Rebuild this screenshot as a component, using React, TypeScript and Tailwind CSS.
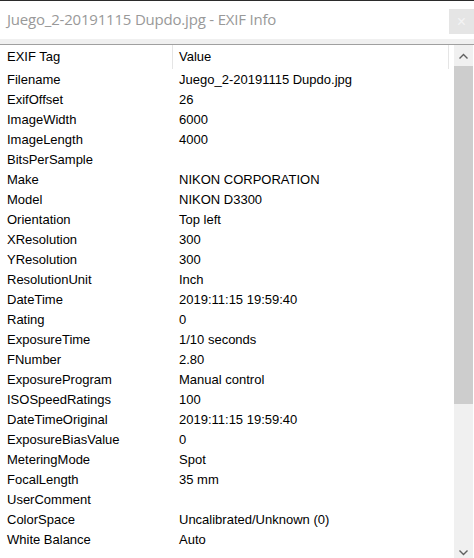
import React from 'react';

const rows: [string, string][] = [
  ['Filename', 'Juego_2-20191115 Dupdo.jpg'],
  ['ExifOffset', '26'],
  ['ImageWidth', '6000'],
  ['ImageLength', '4000'],
  ['BitsPerSample', ''],
  ['Make', 'NIKON CORPORATION'],
  ['Model', 'NIKON D3300'],
  ['Orientation', 'Top left'],
  ['XResolution', '300'],
  ['YResolution', '300'],
  ['ResolutionUnit', 'Inch'],
  ['DateTime', '2019:11:15 19:59:40'],
  ['Rating', '0'],
  ['ExposureTime', '1/10 seconds'],
  ['FNumber', '2.80'],
  ['ExposureProgram', 'Manual control'],
  ['ISOSpeedRatings', '100'],
  ['DateTimeOriginal', '2019:11:15 19:59:40'],
  ['ExposureBiasValue', '0'],
  ['MeteringMode', 'Spot'],
  ['FocalLength', '35 mm'],
  ['UserComment', ''],
  ['ColorSpace', 'Uncalibrated/Unknown (0)'],
  ['White Balance', 'Auto'],
];

const Chevron: React.FC<{ down?: boolean }> = ({ down }) => (
  <svg width="9" height="6" viewBox="0 0 9 6" className="block">
    <path
      d={down ? 'M0.5 0.5 L4.5 4.5 L8.5 0.5' : 'M0.5 5.5 L4.5 1.5 L8.5 5.5'}
      fill="none"
      stroke="#606060"
      strokeWidth="1.4"
    />
  </svg>
);

const App: React.FC = () => {
  return (
    <div className="w-[474px] h-[558px] overflow-hidden bg-white flex flex-col border-t border-[#2b2b2b] font-['Liberation_Sans',Arial,sans-serif]">
      {/* title bar */}
      <div className="h-[38px] shrink-0 flex items-start justify-between">
        <div className="pl-[7px] pt-[8px] text-[15px] leading-[20px] text-[#999999] font-['Open_Sans','Noto_Sans',sans-serif] tracking-[-0.2px]">
          Juego_2-20191115 Dupdo.jpg - EXIF Info
        </div>
        <div className="mt-[8px] w-[25px] h-[25px] bg-[#e5e5e5] flex items-center justify-center text-[#f4f4f4] text-[16px] leading-none">
          ×
        </div>
      </div>
      <div className="h-[5px] shrink-0 bg-[#f0f0f0] border-b border-[#a0a0a0] box-content" />

      <div className="flex-1 flex min-h-0">
        {/* list */}
        <div className="flex-1 min-w-0 text-[13px] text-black">
          <div className="h-[25px] flex w-[449px]">
            <div className="w-[173px] pl-[7px] pt-[2px] border-r border-[#e5e5e5] h-[24px]">EXIF Tag</div>
            <div className="flex-1 pl-[6px] pt-[2px] border-r border-[#e5e5e5] h-[24px]">Value</div>
          </div>
          {rows.map(([tag, value]) => (
            <div key={tag} className="h-[20px] flex items-center whitespace-nowrap">
              <div className="w-[173px] pl-[7px]">{tag}</div>
              <div className="pl-[6px]">{value}</div>
            </div>
          ))}
        </div>

        {/* scrollbar */}
        <div className="w-[19px] mr-[1px] shrink-0 bg-[#f0f0f0] flex flex-col">
          <div className="h-[21px] flex items-center justify-center">
            <Chevron />
          </div>
          <div className="h-[338px] bg-[#cdcdcd]" />
          <div className="flex-1" />
          <div className="h-[12px] flex items-start justify-center pt-[4px]">
            <Chevron down />
          </div>
        </div>
      </div>
    </div>
  );
};

export default App;
